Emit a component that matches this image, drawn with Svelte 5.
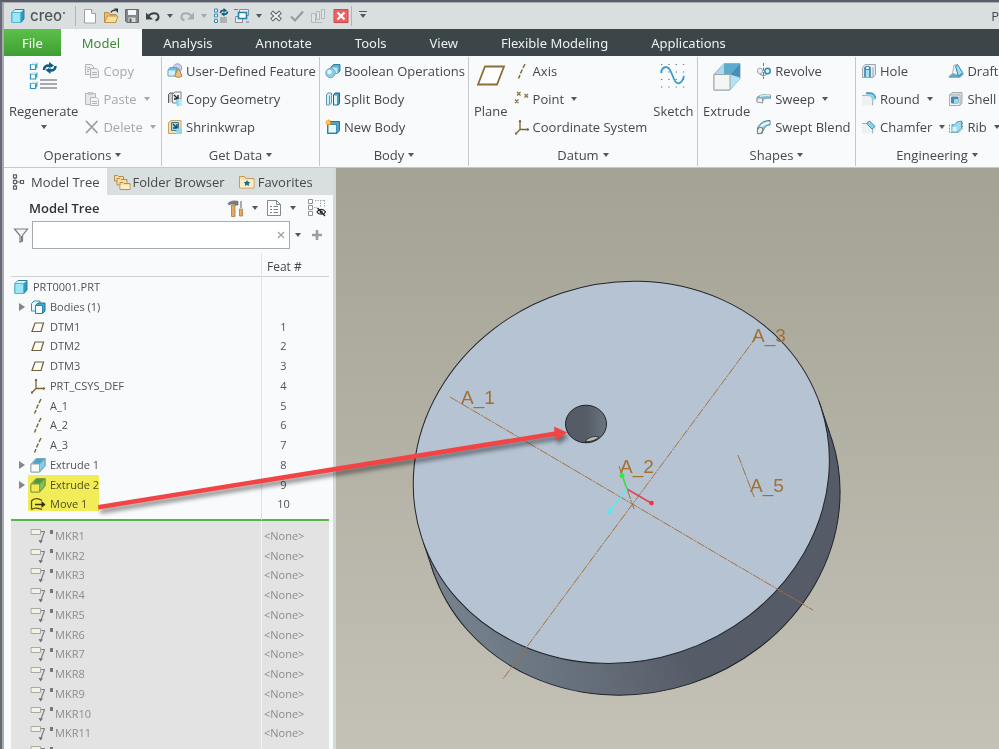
<script lang="ts">
  const icons: Record<string, string> = {
    cube: `<path d="M2 4.500 5 1.500h9v9.500L11 14.500H2z" fill="#2f9cc0" stroke="#2b7f9e"/><path d="M2 4.500h8.500v10H2z" fill="#9be6f7" stroke="#58b6d0"/><path d="M2.500 4 5 2h8.500L11 4z" fill="#d5f5fb"/>`,
    file: `<path d="M2.500 1.500h7l4 4v9.500h-11z" fill="#fff" stroke="#9a9fa2"/><path d="M9.500 1.500v4h4" fill="#e4e7e8" stroke="#9a9fa2"/>`,
    open: `<path d="M1.500 14V4.500h4l1.500 2h6V14z" fill="#e9bd68" stroke="#b98d45"/><path d="M1.500 14.500 4.500 8H15l-2.500 6.500z" fill="#fbdf9f" stroke="#c1964c"/><path d="M8 4.500c1-2.500 3.500-2.500 4.500-2" fill="none" stroke="#333" stroke-width="1.500"/><path d="M11 .5h4V5z" fill="#333"/>`,
    save: `<path d="M1.500 1.500h13v13H3L1.500 13z" fill="#85888a" stroke="#66696b"/><path d="M4 2h8v5H4z" fill="#f5f6f6"/><path d="M4.500 9.500h7V14h-7z" fill="#d7dadb"/><path d="M5.500 10.500h2V14h-2z" fill="#55585a"/>`,
    undo: `<path d="M3 8.500C6 4 13 4 13.500 8.500c.2 2-1.200 3.500-3 4" fill="none" stroke="#3c4246" stroke-width="2"/><path d="M1 4.500v7h7z" fill="#3c4246"/>`,
    redo: `<path d="M13 8.500C10 4 3 4 2.500 8.500c-.2 2 1.200 3.500 3 4" fill="none" stroke="#a7acae" stroke-width="2"/><path d="M15 4.500v7H8z" fill="#a7acae"/>`,
    regen: `<g fill="#fff" stroke="#2f8bb8"><path d="M1.500 1h3v3h-3zM1.500 6h3v3h-3zM1.500 11.500h3v3h-3z"/></g><path d="M7 10h7M7 12h7M7 14h7" stroke="#80868a"/><path d="M7.500 5c0-2 2-3 4-2.500M14.500 3.500c0 2-2 3-4 2.500" fill="none" stroke="#155d7e" stroke-width="1.800"/><path d="M10.500 0v5L14 2.500zM11.500 3.500v5L8 6z" fill="#155d7e"/>`,
    windows: `<path d="M5.500 1.500h9v6h-9zM1.500 8.500h7v6h-7z" fill="#e8eef0" stroke="#888e92"/><path d="M4.500 4.500h8v6h-8z" fill="#fff" stroke="#1f7fae" stroke-width="1.600"/><path d="M0 1.500h4M12 14h3" stroke="#777d81"/>`,
    cross: `<path d="m3.500 4 9 8m0-8-9 8" stroke="#555a5e" stroke-width="4"/><path d="m4 4.500 8 7m0-7-8 7" stroke="#f1f3f3" stroke-width="2"/>`,
    check: `<path d="m2 8.500 4 4 8-9" fill="none" stroke="#979b9e" stroke-width="2.200"/>`,
    stack: `<g fill="#dfe3e3" stroke="#b3b8ba"><path d="M1.500 5.500h4v9h-4zM6.500 3.500h3v8h-3zM11.500 1.500h3v9h-3z"/></g><path d="M6 14.500h6" stroke="#b3b8ba"/>`,
    stop: `<path d="M1 1.500h14v13H1z" fill="#ec6264" stroke="#d0474c"/><path d="m4.500 4.500 7 7m0-7-7 7" stroke="#fff" stroke-width="2.200"/>`,
    regenBig: `<g fill="#fff" stroke="#2d8fc0" stroke-width="1.200"><path d="M1.500 3.500h5v5h-5zM1.500 13h5v5h-5zM1.500 22.500h5v5h-5z"/></g><g fill="#43a9d2"><path d="m6.500 3.500 2-2v5l-2 2zM6.500 13l2-2v5l-2 2zM6.500 22.500l2-2v5l-2 2z"/></g><path d="m1.500 3.500 2-2h5l-2 2zM1.500 13l2-2h5l-2 2zM1.500 22.500l2-2h5l-2 2z" fill="#c9edf8"/><path d="M11 19h17M11 23h17M11 27h17" stroke="#8c8f92" stroke-width="1.500"/><path d="M15 9c0-4 3-5 6-4M26.500 5c0 4-3 5-6 4" fill="none" stroke="#175d80" stroke-width="2.600"/><path d="M20 1v7l5-3.500zM21.500 6v7l-5-4z" fill="#175d80"/>`,
    copy: `<g fill="#eceeef" stroke="#b4b7b9"><path d="M1.500 1.500h6l2 2v8h-8z"/><path d="M6.500 5.500h6l2 2v7h-8z"/></g><path d="M3 4.500h3M3 6.500h3M3 8.500h2M8 9.500h5M8 11.500h5" stroke="#b4b7b9"/>`,
    paste: `<path d="M1.500 2.500h10v11h-10z" fill="#e6e8e9" stroke="#b4b7b9"/><path d="M4 1h5v3H4z" fill="#c4c7c9"/><path d="M6.500 6.500h6l2 2v6h-8z" fill="#f4f5f6" stroke="#b4b7b9"/><path d="M8 10.500h5M8 12.500h5" stroke="#b4b7b9"/>`,
    del: `<path d="M2.500 2.500 13 13.500M13 2.500 2.500 13.500" stroke="#9b9d9f" stroke-width="1.800" stroke-linecap="round"/>`,
    udf: `<circle cx="10.500" cy="5" r="4.200" fill="#cdd3f3" stroke="#939ac6"/><path d="M1 7 3 4.500h7v6L8 13H1z" fill="#6dc0e2" stroke="#5aa3c1"/><path d="M1.500 7.500H8v5H1.500z" fill="#d3f1fa"/><path d="M11.500 5 15 13c-2 1.800-5 1.800-7.500 0z" fill="#eec07a" stroke="#ab8348"/>`,
    copyGeo: `<path d="M1.500 12V3.500L3 2h3v9" fill="#c7ced3" stroke="#575e64"/><path d="M5.500 3.500 7.500 1H14v7h-4v4H5.500z" fill="#eef2f4" stroke="#7b8288"/><path d="m7 4 4 4m0-4v4H7" fill="none" stroke="#24292c" stroke-width="1.400"/><path d="M9.500 8h5v7h-5z" fill="#8bdaf4"/><path d="M12 8h3v7h-3z" fill="#b9ebfa"/>`,
    shrink: `<path d="M1.500 3.500 4 1.500h10v10l-2.500 3h-10z" fill="#f7dfae" stroke="#c5a468"/><path d="M4.500 3.500h7v8h-7z" fill="#a8dbed" stroke="#397a98"/><path d="m6 5 4 4m0-4v4H6" fill="none" stroke="#1e4052" stroke-width="1.400"/><path d="M9.500 9.500h5.500V15H9.500z" fill="#8bdaf4"/>`,
    boolean: `<path d="M6 4 8.500 1.500H15V8l-2.500 2.500H6z" fill="#5cb0d6" stroke="#397ea1"/><path d="M6.500 4.500h6v6h-6z" fill="#c2e8f6"/><circle cx="5.500" cy="10" r="4.700" fill="#8ecbe5" stroke="#6ba9c6"/><circle cx="4.500" cy="9" r="2.300" fill="#dff4fb"/>`,
    split: `<path d="M1.500 4 3 2h3.500v10l-2 2h-3z" fill="#d3eef7" stroke="#5c98b3"/><path d="M4.500 4.500V13" stroke="#5c98b3"/><path d="M8.500 4 10 2h4.500v10L13 14H8.500z" fill="#46a0ca" stroke="#245f7c"/><path d="M9 4.500h3v9H9z" fill="#ddf4fb"/>`,
    newBody: `<path d="M2.500 5 5 2.500h9.500v9L12 14.500H2.500z" fill="#4ba5cf" stroke="#2a708f"/><path d="M3 5.500h8.500V14H3z" fill="#e6f7fc" stroke="#3d8fb3"/><path d="M3.500.5v6M.5 3.500h6M1.500 1.500l4 4M5.500 1.500l-4 4" stroke="#f39a1e" stroke-width="1.200"/><circle cx="3.500" cy="3.500" r="1.300" fill="#ffe27a"/>`,
    planeBig: `<path d="M9 5.500h19l-7 18H2z" fill="#fff" stroke="#8b6f35" stroke-width="1.800"/>`,
    axis: `<path d="M11 1 9 5M8.300 6.500 6.500 10.500M6 12l-1.500 3.500" stroke="#7f6a3b" stroke-width="1.500"/>`,
    point: `<path d="m3 1 3.500 3.500m0-3.500L3 4.500M10.500 3l3.500 3.500m0-3.500-3.500 3.500M1 8.500 4.500 12m0-3.500L1 12" stroke="#8b7343" stroke-width="1.300"/>`,
    csys: `<path d="M6 1v9.500h9M6 10.500 1.500 15" fill="none" stroke="#7b6430" stroke-width="1.300"/><path d="M4.500 3 6 .5 7.500 3M13 9l2.500 1.500L13 12M1 13v2.500h2.500z" fill="#7b6430"/>`,
    sketchBig: `<path d="M3 3.500h24M3 11h24M3 18.500h24M3 26h24" stroke="#6f757a" stroke-width="1.200" stroke-dasharray="1.300 6"/><path d="M3 12c1-7 7-8 10-1l3 7c3 7 8 5 10-3" fill="none" stroke="#2f9ed0" stroke-width="1.800"/>`,
    extrudeBig: `<path d="M2 13.500 12 2.500h16v15L18 29H2z" fill="#a9dcf0" stroke="#86b0c2"/><path d="M12 2.500h16L18 13.500H3z" fill="#a9dcf0"/><path d="M12 2.500h16L18 13.500h-6z" fill="#5fabcc"/><path d="M28 2.500v14l-10-3z" fill="#4590b4"/><path d="m18 13.500 10 4L18 29z" fill="#b4e4f3"/><path d="M2 13.500h16V29H2z" fill="#f4f5f5" stroke="#9aa4a9"/>`,
    extrude: `<path d="M1 7 6 1.500h9v7.500L9.500 15H1z" fill="#a9dcf0" stroke="#7fa8b9"/><path d="M6 2h8.500L9.500 7h-7z" fill="#4ea2c9"/><path d="M9.500 7 15 1.500V9l-5.500 6z" fill="#8bcbe4" stroke="#6aa2bb"/><path d="M1 7h8.500v8H1z" fill="#f7f8f8" stroke="#9ba6ab"/>`,
    revolve: `<path d="M7.500 0v16" stroke="#6d7880" stroke-dasharray="3 1.500"/><ellipse cx="4" cy="8" rx="2.500" ry="3" fill="#eef1f2" stroke="#9ca5aa"/><circle cx="11.500" cy="8" r="2.700" fill="#d9f2fa" stroke="#2f86af" stroke-width="1.500"/><path d="M4 11c3 2.500 5 1.500 7 0" fill="none" stroke="#4b93b4"/>`,
    sweep: `<path d="M1 6.500c3-3 8-3.500 13.500-2.500v3.500c-3-.5-6 0-7 1l-1 2.500-5.500-1z" fill="#7cc2df" stroke="#8a9fa8"/><path d="M1 7h5.500v5L1 11z" fill="#eceff0" stroke="#929ba0"/><path d="M4 5.500c3-1.500 7-1.500 10-1" stroke="#d2eef8" stroke-width="1.500" fill="none"/>`,
    swept: `<path d="M1.500 9C4 4 8 1.500 14 1.500V6C10 6 8 9 6 14.500H1.500z" fill="#8fd0e8" stroke="#587d8d"/><path d="M4 9c2-3.500 5-5 9.500-5.500" fill="none" stroke="#f0fafd" stroke-width="1.800"/><ellipse cx="4" cy="11.500" rx="2.500" ry="3.300" transform="rotate(25 4 11.500)" fill="#eef0f1" stroke="#747d82"/>`,
    hole: `<path d="M1.500 4.500 4 1.500h10.500v10L12 14.500H1.500z" fill="#e4eaed" stroke="#9da7ac"/><path d="M12 4.500v10" stroke="#9da7ac"/><path d="M4 14V5.500c0-2 5-2 5 0V14" fill="#a5e0f3" stroke="#26789c" stroke-width="1.400"/><ellipse cx="6.500" cy="5" rx="2.500" ry="1.500" fill="#fff" stroke="#26789c"/>`,
    round: `<path d="M1 4.500 4 2h6c3 1 4.500 3 4.500 5.500V12L12 14.500H1z" fill="#eef1f2"/><path d="M1 4.500h6c3 0 4.500 2 4.500 4.500v5.500" fill="none" stroke="#aeb5b9"/><path d="M4.500 2H9c3.500 0 5.500 2.500 5.500 5.500L11.500 10c0-3-1.500-5.500-5-5.500z" fill="#8ad4ee"/><path d="M5 2h4c3.500 0 5.500 2.500 5.500 5.500" fill="none" stroke="#3b90b5" stroke-width="1.300"/>`,
    chamfer: `<path d="M1 4.500 4 2h5l5.500 5.500V12L12 14.500H1z" fill="#eef1f2"/><path d="M1 4.500h5L11.500 10v4.500" fill="none" stroke="#aeb5b9"/><path d="m8.500 2 5.500 5.500-3 2.500L5.500 4.500z" fill="#8ad4ee" stroke="#3b90b5"/>`,
    draft: `<path d="M1 13.500 5 10h10v1.500l-3 3H1z" fill="#5ea8c9" stroke="#a1aaaf"/><path d="M4.500 10.500 6 2h3l2 10z" fill="#f1f3f4" stroke="#aab2b6"/><path d="m9.500 1.500 5 8-4 4L7.500 3z" fill="#9fdcf1" stroke="#2d86ad"/>`,
    shell: `<path d="M1.500 4 4 1.500h10V12l-2 2.500H1.500z" fill="#d5dcdf" stroke="#a5aeb3"/><path d="M1.500 4H12v10.500H1.500z" fill="#f1f3f4" stroke="#a5aeb3"/><path d="M3.500 6H10v6H3.500z" fill="#3f8fb1" stroke="#5a8499"/><path d="M6 8h4v4H6z" fill="#9bd6ea"/>`,
    rib: `<path d="M1.500 5.500v8h9l4-3.500V2" fill="none" stroke="#8c979d" stroke-dasharray="2 1"/><path d="M4 5.500c2 1 4 0 5-2.500L13.500 2v7l-4 4H4z" fill="#9adcf1" stroke="#4d9dbe"/><path d="M4.500 8h4v4.500h-4z" fill="#d9f2fa"/>`,
    tree: `<path d="M4 4v8M5 8h4" stroke="#5c6266"/><g fill="#fff" stroke="#5c6266" stroke-width="1.200"><path d="M2.500.8h3v3h-3zM2.500 6.500h3v3h-3zM2.500 12.200h3v3h-3zM9.500 6.500h3v3h-3z"/></g>`,
    folders: `<g fill="#f7dca4" stroke="#b68f4e"><path d="M.5 7V1.500h3l1 1h5V7z"/><path d="M3 11V4.500h3l1 1h6V11z"/><path d="M6 15.500V8.500h3l1 1h6v6z"/></g><path d="M6.500 11h9v4h-9z" fill="#fdeec6"/>`,
    favorite: `<path d="M.5 14V2.500h5l1.500 2h8V14z" fill="#f7dca4" stroke="#c19c5d"/><path d="M1 5.500h13.500v8H1z" fill="#fdeec6"/><path d="m8 6 1 1.800 2.300.4-1.500 1.500.3 2.300-2.100-1-2.100 1 .3-2.300-1.500-1.500L7 7.800z" fill="#1f6f90"/>`,
    tools: `<path d="M0 3.500C2 .5 8 .5 10 1.500V5H7V4H3L1 5z" fill="#7b7f83" stroke="#55595c" stroke-width=".6"/><path d="M3.500 5H7v11.500H3.500z" fill="#e3ab67" stroke="#a87840" stroke-width=".8"/><path d="M13 1v7" stroke="#8b9094" stroke-width="1.500"/><path d="M11.500 9h3v7h-3z" fill="#e3ab67" stroke="#a87840" stroke-width=".8"/>`,
    list: `<path d="M1.500.5h9l4 4v11h-13z" fill="#fff" stroke="#83898d"/><path d="M10.500.5v4h4" fill="none" stroke="#83898d"/><path d="M4 6.500h2M4 9.500h2M4 12.500h2M7.500 6.500H12M7.500 9.500H12M7.500 12.500H12" stroke="#7b8185"/>`,
    hide: `<g fill="#fff" stroke="#8c9296"><path d="M.5.500h4v4h-4zM.5 6.500h4v4h-4zM.5 12.500h4v4h-4z"/></g><path d="M6 8.500h3M7 1.500h10M12.500 1v7M16.500 1v7" stroke="#a8adb0" stroke-dasharray="1.500 1"/><path d="M9 13c2-3.500 6.500-3.500 8.500 0-2 3-6.500 3-8.500 0z" fill="#fff" stroke="#24282a" stroke-width="1.200"/><circle cx="13.200" cy="13" r="1.500" fill="#24282a"/><path d="m9.500 9 7.500 8" stroke="#24282a" stroke-width="1.300"/>`,
    filter: `<path d="M1.500 2h13L9.500 8.500V14L7 15V8.500z" fill="#f4f5f6" stroke="#787e82" stroke-width="1.200"/><path d="M8.500 9v5.500" stroke="#787e82"/>`,
    plus: `<path d="M8 3v10M3 8h10" stroke="#9a9ea1" stroke-width="2.600"/>`,
    clear: `<path d="m5 5 6 6m0-6-6 6" stroke="#9a9ea1" stroke-width="1.200"/>`,
    bodies: `<path d="M1.500 4.500 4 2h6v7.500L8 12H1.500z" fill="#e6f6fb" stroke="#3b8fb4"/><path d="M5.500 6.500 8 4h7v8l-2.500 2.500h-7z" fill="#49a6cf" stroke="#23728f"/><path d="M5.500 6.500h7v8h-7z" fill="#f2fbfe" stroke="#2c83ab"/>`,
    datum: `<path d="M5 4h8.500L11 12.500H2z" fill="#fdfcf8" stroke="#6f5f37" stroke-width="1.200"/>`,
    move: `<path d="M1.500 13.500V5C4 1.500 9 2.500 12 4.500M1.500 13.500c4-3 7-1 10.500 0" fill="none" stroke="#5d522b" stroke-width="1.300"/><path d="M5 8.500h8" stroke="#3a3318" stroke-width="1.500"/><path d="M11.500 5 15.500 8.500l-4 3.500z" fill="#3a3318"/>`,
    marker: `<path d="M1 1.500h9.500v5H1z" fill="#f4f1e6" stroke="#a9a9a5"/><path d="M11 3.500h4M14.500 3.500 11 13" stroke="#808284" stroke-width="1.200"/><path d="M8.500 12 10.500 15.500 13 12.500z" fill="#6f7274"/>`
  };

  type Item = { icon: string; label: string; menu?: boolean; off?: boolean };
  type Group = { name: string; key: string; big?: Item[]; cols: Item[][]; tail?: Item[] };

  const groups: Group[] = [
    {
      name: 'Operations', key: 'ops',
      big: [{ icon: 'regenBig', label: 'Regenerate', menu: true }],
      cols: [[
        { icon: 'copy', label: 'Copy', off: true },
        { icon: 'paste', label: 'Paste', menu: true, off: true },
        { icon: 'del', label: 'Delete', menu: true, off: true }
      ]]
    },
    {
      name: 'Get Data', key: 'data',
      cols: [[
        { icon: 'udf', label: 'User-Defined Feature' },
        { icon: 'copyGeo', label: 'Copy Geometry' },
        { icon: 'shrink', label: 'Shrinkwrap' }
      ]]
    },
    {
      name: 'Body', key: 'body',
      cols: [[
        { icon: 'boolean', label: 'Boolean Operations' },
        { icon: 'split', label: 'Split Body' },
        { icon: 'newBody', label: 'New Body' }
      ]]
    },
    {
      name: 'Datum', key: 'datum',
      big: [{ icon: 'planeBig', label: 'Plane' }],
      cols: [[
        { icon: 'axis', label: 'Axis' },
        { icon: 'point', label: 'Point', menu: true },
        { icon: 'csys', label: 'Coordinate System' }
      ]],
      tail: [{ icon: 'sketchBig', label: 'Sketch' }]
    },
    {
      name: 'Shapes', key: 'shapes',
      big: [{ icon: 'extrudeBig', label: 'Extrude' }],
      cols: [[
        { icon: 'revolve', label: 'Revolve' },
        { icon: 'sweep', label: 'Sweep', menu: true },
        { icon: 'swept', label: 'Swept Blend' }
      ]]
    },
    {
      name: 'Engineering', key: 'eng',
      cols: [
        [
          { icon: 'hole', label: 'Hole' },
          { icon: 'round', label: 'Round', menu: true },
          { icon: 'chamfer', label: 'Chamfer', menu: true }
        ],
        [
          { icon: 'draft', label: 'Draft' },
          { icon: 'shell', label: 'Shell' },
          { icon: 'rib', label: 'Rib', menu: true }
        ]
      ]
    }
  ];

  const tabs = ['Analysis', 'Annotate', 'Tools', 'View', 'Flexible Modeling', 'Applications'];

  const features = [
    { icon: 'cube', label: 'PRT0001.PRT', feat: '', root: true },
    { icon: 'bodies', label: 'Bodies (1)', feat: '', expand: true },
    { icon: 'datum', label: 'DTM1', feat: '1' },
    { icon: 'datum', label: 'DTM2', feat: '2' },
    { icon: 'datum', label: 'DTM3', feat: '3' },
    { icon: 'csys', label: 'PRT_CSYS_DEF', feat: '4' },
    { icon: 'axis', label: 'A_1', feat: '5' },
    { icon: 'axis', label: 'A_2', feat: '6' },
    { icon: 'axis', label: 'A_3', feat: '7' },
    { icon: 'extrude', label: 'Extrude 1', feat: '8', expand: true },
    { icon: 'extrude', label: 'Extrude 2', feat: '9', expand: true, marked: true },
    { icon: 'move', label: 'Move 1', feat: '10', marked: true }
  ];
  const markers = Array.from({ length: 12 }, (_, i) => `MKR${i + 1}`);
  let query = $state('');
</script>

{#snippet icon(name: string, size = 16)}
  <svg class="icon" width={size} height={size} viewBox="0 0 {size} {size}" fill="none" aria-hidden="true">{@html icons[name]}</svg>
{/snippet}

{#snippet caret()}<span class="caret" aria-hidden="true"></span>{/snippet}

{#snippet quick(name: string, label: string)}
  <button class="quick" aria-label={label}>{@render icon(name)}</button>
{/snippet}

{#snippet drop(label: string, off = false)}
  <button class="drop" class:off aria-label={label}>{@render caret()}</button>
{/snippet}

{#snippet bigButton(item: Item)}
  <button class="big">
    {@render icon(item.icon, 30)}
    <span>{item.label}</span>
    {#if item.menu}{@render caret()}{/if}
  </button>
{/snippet}

<div class="app">
  <header class="titlebar">
    <div class="brand">{@render icon('cube')}<span>creo</span></div>
    <div class="quickbar">
      {@render quick('file', 'New')}
      {@render quick('open', 'Open')}
      {@render quick('save', 'Save')}
      {@render quick('undo', 'Undo')}
      {@render drop('Undo list')}
      {@render quick('redo', 'Redo')}
      {@render drop('Redo list', true)}
      {@render quick('regen', 'Regenerate')}
      {@render quick('windows', 'Windows')}
      {@render drop('Window list')}
      {@render quick('cross', 'Close')}
      {@render quick('check', 'Accept')}
      {@render quick('stack', 'Arrange')}
      {@render quick('stop', 'Exit')}
    </div>
    <button class="customize" aria-label="Customize toolbar"><i></i>{@render caret()}</button>
    <span class="doc">P</span>
  </header>

  <nav class="tabs">
    <button class="filetab">File</button>
    <button class="current">Model</button>
    {#each tabs as tab}<button>{tab}</button>{/each}
  </nav>

  <div class="ribbon">
    {#each groups as group}
      <section class="group {group.key}">
        <div class="tools">
          {#each group.big ?? [] as item}{@render bigButton(item)}{/each}
          {#each group.cols as col}
            <div class="col">
              {#each col as item}
                <button class="tool" class:off={item.off}>
                  {@render icon(item.icon)}<span>{item.label}</span>
                  {#if item.menu}{@render caret()}{/if}
                </button>
              {/each}
            </div>
          {/each}
          {#each group.tail ?? [] as item}{@render bigButton(item)}{/each}
        </div>
        <button class="groupname">{group.name}{@render caret()}</button>
      </section>
    {/each}
  </div>

  <div class="workspace">
    <aside class="panel">
      <div class="paneltabs">
        <button class="on">{@render icon('tree')}Model Tree</button>
        <button>{@render icon('folders')}Folder Browser</button>
        <button>{@render icon('favorite')}Favorites</button>
      </div>
      <div class="panelbody">
        <div class="heading">
          <h2>Model Tree</h2>
          <button aria-label="Settings">{@render icon('tools')}{@render caret()}</button>
          <button aria-label="Show">{@render icon('list')}{@render caret()}</button>
          <button aria-label="Hide tree items">{@render icon('hide', 18)}</button>
        </div>
        <div class="search">
          <label for="tree-filter" aria-label="Filter tree">{@render icon('filter')}</label>
          <div class="box">
            <input id="tree-filter" type="text" bind:value={query} />
            <button aria-label="Clear filter" onclick={() => (query = '')}>{@render icon('clear')}</button>
          </div>
          <button aria-label="Filter options">{@render caret()}</button>
          <button aria-label="Add filter">{@render icon('plus')}</button>
        </div>
        <table>
          <thead><tr><th aria-label="Name"></th><th>Feat #</th></tr></thead>
          <tbody>
            {#each features as f}
              <tr>
                <td>
                  <div class="node" class:root={f.root}>
                    {#if !f.root}<span class="twist" class:show={f.expand}></span>{/if}
                    <span class="name" class:marked={f.marked}>{@render icon(f.icon)}{f.label}</span>
                  </div>
                </td>
                <td class="num">{f.feat}</td>
              </tr>
            {/each}
          </tbody>
          <tbody class="gap"><tr><td></td><td></td></tr></tbody>
          <tbody class="pending">
            <tr class="lead"><td></td><td></td></tr>
            {#each markers as m}
              <tr>
                <td><div class="node"><span class="twist"></span><span class="name">{@render icon('marker')}<i class="dot"></i>{m}</span></div></td>
                <td>&lt;None&gt;</td>
              </tr>
            {/each}
          </tbody>
        </table>
      </div>
    </aside>

    <main class="viewport">
      <svg width="100%" height="100%" role="img" aria-label="Disc with hole and datum axes">
        <defs>
          <linearGradient id="rim" gradientUnits="userSpaceOnUse" x1="424" y1="0" x2="640" y2="0">
            <stop offset="0" stop-color="#75828e" /><stop offset="1" stop-color="#565c67" />
          </linearGradient>
          <linearGradient id="bore"><stop offset=".5" stop-color="#555c66" /><stop offset="1" stop-color="#6b7681" /></linearGradient>
        </defs>
        <g transform="translate(-336 -168)">
          <ellipse cx="632" cy="504" rx="210" ry="189" transform="rotate(-18.100 632 504)" fill="url(#rim)" stroke="#20242a" />
          <path d="M819 401 829.700 433 434.300 575 423.600 543z" fill="url(#rim)" />
          <path d="M819 401 829.700 433M434.300 575 423.600 543" stroke="#20242a" />
          <ellipse cx="621.300" cy="472.300" rx="210" ry="189" transform="rotate(-18.100 621.300 472.300)" fill="#b5c3d3" stroke="#20242a" />
          <ellipse cx="586" cy="424" rx="20.500" ry="18.800" fill="url(#bore)" stroke="#20242a" />
          <path d="M585 441.500c3-4 9-6 14-4.500-3 3-8 5-14 4.500z" fill="#bbb8ad" stroke="#20242a" stroke-width=".8" />
          <g stroke="#a5713a" stroke-width="1" stroke-dasharray="9 1 2 1">
            <path d="M450 397 813 610M757 336 503 679M738 455 754 497M619 466 634 509" />
          </g>
          <g stroke-width="1.500">
            <path d="m627 489-5-14" stroke="#3fe04a" /><path d="m627 489 24 14" stroke="#e2414f" /><path d="m627 489-18 23" stroke="#5fe6ee" />
          </g>
          <circle cx="622" cy="475.500" r="2.500" fill="#2df035" /><circle cx="651.500" cy="503" r="2.300" fill="#ee3340" /><circle cx="609" cy="512" r="2.300" fill="#45eef5" />
          <g class="axes">
            <text x="461" y="404">A_1</text><text x="620" y="473">A_2</text><text x="752" y="342">A_3</text><text x="750" y="492">A_5</text>
          </g>
        </g>
      </svg>
    </main>

    <svg class="callout" width="100%" height="100%" aria-hidden="true">
      <g transform="translate(-4 -168)">
        <path d="M98 505 554.500 431.500 554 426.500 567 432.500 556 440.500 555 436 98.500 509.500z" fill="#f34344" />
      </g>
    </svg>
  </div>
</div>

<style>
  :global(body) { margin: 0; }
  .app {
    box-sizing: border-box;
    height: 100vh;
    overflow: hidden;
    display: flex;
    flex-direction: column;
    padding: 1px 0 0 2px;
    border-top: 2px solid #565e6c;
    border-left: 2px solid #666a74;
    background: #a9abb1;
    color: #45494c;
    font: 13px/18px 'Open Sans', 'Noto Sans', sans-serif;
  }
  button {
    display: flex;
    align-items: center;
    border: 0;
    padding: 0;
    margin: 0;
    background: none;
    color: inherit;
    font: inherit;
    white-space: nowrap;
  }
  .icon { display: block; flex: none; overflow: visible; }
  .caret { flex: none; border: 3px solid transparent; border-top: 4px solid #54585b; border-bottom: 0; }
  .off { color: #a5a8aa; }
  .off .caret { border-top-color: #a5a8aa; }

  .titlebar { flex: none; height: 26px; display: flex; align-items: center; background: #d9dfde; }
  .brand { display: flex; align-items: center; gap: 4px; width: 65px; padding-left: 6px; border-right: 1px solid #aeb4b5; color: #505558; font: 500 15px/20px Inter, sans-serif; }
  .brand::after { content: ''; align-self: flex-start; width: 2px; height: 2px; margin: 6px 0 0 -3px; border-radius: 1px; background: #505558; }
  .quickbar { display: flex; padding-left: 3px; }
  .quick { width: 21px; height: 20px; justify-content: center; }
  .quick:last-child { margin-left: 2px; }
  .drop { width: 13px; justify-content: center; }
  .customize { gap: 8px; height: 20px; }
  .customize i { width: 1px; height: 20px; background: #aeb4b5; }
  .customize .caret { position: relative; }
  .customize .caret::before { content: ''; position: absolute; left: -4px; top: -7px; width: 8px; height: 1px; background: #54585b; }
  .doc { margin-left: auto; }

  .tabs { flex: none; height: 27px; display: flex; background: #3c4548; color: #edf0f1; font-family: 'Noto Sans', sans-serif; }
  .tabs button { padding: 0 22px 0 21px; }
  .tabs .filetab { padding: 0 18px; background: linear-gradient(#5cc04a, #3f9e33); color: #fff; }
  .tabs .current { background: #f9fafb; color: #3f8a34; }

  .ribbon { flex: none; height: 111px; display: flex; background: #f9fafb; border-bottom: 1px solid #c6c9ca; }
  .group { flex: none; box-sizing: border-box; display: flex; flex-direction: column; margin: 1px 0; border-right: 1px solid #c5c8ca; }
  .ops, .data, .shapes { width: 158px; }
  .body { width: 149px; }
  .datum { width: 229px; }
  .eng { width: 162px; border: 0; }
  .tools { height: 87px; display: flex; padding: 0 5px; }
  .ops .tools, .datum .tools, .shapes .tools { gap: 6px; }
  .eng .tools { gap: 3px; }
  .datum .big:last-child { margin-left: auto; }
  .col { display: flex; flex-direction: column; }
  .tool { height: 28px; gap: 3px; }
  .tool .caret, .groupname .caret { margin-left: 4px; }
  .big { flex-direction: column; padding-top: 4px; }
  .big span:first-of-type { margin-top: 11px; }
  .big .caret { margin-top: 5px; }
  .groupname { flex: 1; justify-content: center; }

  .workspace { position: relative; flex: 1; min-height: 0; display: flex; }
  .panel { flex: 0 0 332px; box-sizing: border-box; display: flex; flex-direction: column; border-right: 3px solid #d3dad9; background: #f9fafb; }
  .paneltabs { flex: none; height: 27px; display: flex; background: #d8dfde; }
  .paneltabs button { gap: 3px; padding: 0 7px; }
  .paneltabs .on { gap: 4px; background: #f9fafb; }
  .panelbody { flex: 1; min-height: 0; overflow: hidden; padding: 0 4px 0 7px; }
  .heading { display: flex; align-items: center; gap: 8px; height: 26px; }
  h2 { flex: 1; margin: 0; padding-left: 18px; color: #2f3335; font-size: 13px; font-weight: 600; }
  .heading button { gap: 8px; }
  .heading button:last-child { margin: 0 3px 0 4px; }
  .search { display: flex; align-items: center; gap: 5px; height: 28px; }
  .search label { margin-right: -2px; padding-left: 2px; }
  .search > button:last-child { margin: 0 4px 0 3px; }
  .box { flex: 1; box-sizing: border-box; height: 28px; display: flex; align-items: center; border: 1px solid #a6abae; background: #fff; }
  .box input { flex: 1; min-width: 0; height: 24px; border: 0; padding: 0 6px; background: none; outline: 0; font: inherit; }
  table { width: 100%; margin-top: 4px; border-collapse: separate; border-spacing: 0; table-layout: fixed; font-size: 11px; line-height: 16px; color: #505356; }
  th, td { padding: 0; text-align: left; font-weight: 400; }
  th { height: 19px; padding-top: 4px; border-bottom: 1px solid #cfd2d4; font-size: 12px; color: #45494c; }
  th:first-child, td:first-child { width: 250px; border-right: 1px solid #e1e3e4; }
  th:last-child { padding-left: 5px; }
  tr { height: 20px; }
  tr:nth-child(4n + 3) { height: 19px; }
  td:last-child { padding-left: 2px; }
  .node { display: flex; align-items: center; height: 19px; padding-left: 8px; }
  .root { padding-left: 0; }
  .twist { width: 9px; }
  .twist::before { content: ''; display: block; width: 0; border: 4px solid transparent; border-right: 0; }
  .twist.show::before { border-left: 6px solid #84878a; }
  .name { position: relative; display: flex; align-items: center; gap: 4px; height: 100%; padding: 0 0 0 2px; white-space: nowrap; }
  .marked { width: 69px; }
  .marked::after { content: ''; position: absolute; inset: 0 0 -1px; background: #f8f15a; mix-blend-mode: multiply; }
  tr:last-child .marked::after { bottom: 3px; }
  td.num { padding: 0 24px 0 0; text-align: center; }
  .gap tr { height: 7px; }
  .gap td { border-bottom: 2px solid #58b548; }
  .pending { background: #e3e3e3; color: #8a8c8e; }
  .pending td:first-child { border-color: #f3f3f3; }
  .pending .lead { height: 5px; }
  .dot { align-self: flex-start; width: 3px; height: 4px; margin: 3px -2px 0 0; background: #747678; }

  .viewport { flex: 1; min-width: 0; overflow: hidden; background: linear-gradient(#a4a294, #c4c2b7); }
  .viewport svg { display: block; }
  .axes { fill: #a5702f; font: 19px 'Liberation Sans', Arial, sans-serif; }
  .callout { position: absolute; inset: 0; pointer-events: none; filter: drop-shadow(2px 4px 2px rgb(0 0 0 / 45%)); }
</style>
